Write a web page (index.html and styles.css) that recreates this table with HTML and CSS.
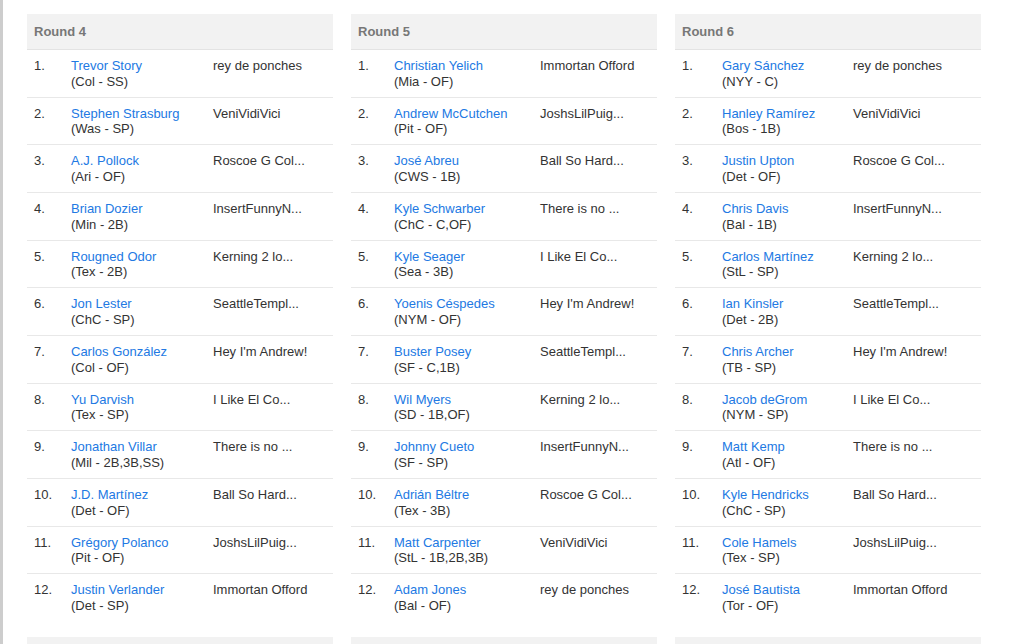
FILE: index.html
```html
<!DOCTYPE html>
<html>
<head>
<meta charset="utf-8">
<link rel="stylesheet" href="styles.css">
</head>
<body>
<div class="page">
  <div class="rounds">
    <section class="round r4">
      <div class="head">Round 4</div>
      <div class="row"><span class="num">1.</span><span class="player"><a>Trevor Story</a><br>(Col - SS)</span><span class="mgr">rey de ponches</span></div>
      <div class="row"><span class="num">2.</span><span class="player"><a>Stephen Strasburg</a><br>(Was - SP)</span><span class="mgr">VeniVidiVici</span></div>
      <div class="row"><span class="num">3.</span><span class="player"><a>A.J. Pollock</a><br>(Ari - OF)</span><span class="mgr">Roscoe G Col...</span></div>
      <div class="row"><span class="num">4.</span><span class="player"><a>Brian Dozier</a><br>(Min - 2B)</span><span class="mgr">InsertFunnyN...</span></div>
      <div class="row"><span class="num">5.</span><span class="player"><a>Rougned Odor</a><br>(Tex - 2B)</span><span class="mgr">Kerning 2 lo...</span></div>
      <div class="row"><span class="num">6.</span><span class="player"><a>Jon Lester</a><br>(ChC - SP)</span><span class="mgr">SeattleTempl...</span></div>
      <div class="row"><span class="num">7.</span><span class="player"><a>Carlos González</a><br>(Col - OF)</span><span class="mgr">Hey I'm Andrew!</span></div>
      <div class="row"><span class="num">8.</span><span class="player"><a>Yu Darvish</a><br>(Tex - SP)</span><span class="mgr">I Like El Co...</span></div>
      <div class="row"><span class="num">9.</span><span class="player"><a>Jonathan Villar</a><br>(Mil - 2B,3B,SS)</span><span class="mgr">There is no ...</span></div>
      <div class="row"><span class="num">10.</span><span class="player"><a>J.D. Martínez</a><br>(Det - OF)</span><span class="mgr">Ball So Hard...</span></div>
      <div class="row"><span class="num">11.</span><span class="player"><a>Grégory Polanco</a><br>(Pit - OF)</span><span class="mgr">JoshsLilPuig...</span></div>
      <div class="row"><span class="num">12.</span><span class="player"><a>Justin Verlander</a><br>(Det - SP)</span><span class="mgr">Immortan Offord</span></div>
    </section>
    <section class="round r5">
      <div class="head">Round 5</div>
      <div class="row"><span class="num">1.</span><span class="player"><a>Christian Yelich</a><br>(Mia - OF)</span><span class="mgr">Immortan Offord</span></div>
      <div class="row"><span class="num">2.</span><span class="player"><a>Andrew McCutchen</a><br>(Pit - OF)</span><span class="mgr">JoshsLilPuig...</span></div>
      <div class="row"><span class="num">3.</span><span class="player"><a>José Abreu</a><br>(CWS - 1B)</span><span class="mgr">Ball So Hard...</span></div>
      <div class="row"><span class="num">4.</span><span class="player"><a>Kyle Schwarber</a><br>(ChC - C,OF)</span><span class="mgr">There is no ...</span></div>
      <div class="row"><span class="num">5.</span><span class="player"><a>Kyle Seager</a><br>(Sea - 3B)</span><span class="mgr">I Like El Co...</span></div>
      <div class="row"><span class="num">6.</span><span class="player"><a>Yoenis Céspedes</a><br>(NYM - OF)</span><span class="mgr">Hey I'm Andrew!</span></div>
      <div class="row"><span class="num">7.</span><span class="player"><a>Buster Posey</a><br>(SF - C,1B)</span><span class="mgr">SeattleTempl...</span></div>
      <div class="row"><span class="num">8.</span><span class="player"><a>Wil Myers</a><br>(SD - 1B,OF)</span><span class="mgr">Kerning 2 lo...</span></div>
      <div class="row"><span class="num">9.</span><span class="player"><a>Johnny Cueto</a><br>(SF - SP)</span><span class="mgr">InsertFunnyN...</span></div>
      <div class="row"><span class="num">10.</span><span class="player"><a>Adrián Béltre</a><br>(Tex - 3B)</span><span class="mgr">Roscoe G Col...</span></div>
      <div class="row"><span class="num">11.</span><span class="player"><a>Matt Carpenter</a><br>(StL - 1B,2B,3B)</span><span class="mgr">VeniVidiVici</span></div>
      <div class="row"><span class="num">12.</span><span class="player"><a>Adam Jones</a><br>(Bal - OF)</span><span class="mgr">rey de ponches</span></div>
    </section>
    <section class="round r6">
      <div class="head">Round 6</div>
      <div class="row"><span class="num">1.</span><span class="player"><a>Gary Sánchez</a><br>(NYY - C)</span><span class="mgr">rey de ponches</span></div>
      <div class="row"><span class="num">2.</span><span class="player"><a>Hanley Ramírez</a><br>(Bos - 1B)</span><span class="mgr">VeniVidiVici</span></div>
      <div class="row"><span class="num">3.</span><span class="player"><a>Justin Upton</a><br>(Det - OF)</span><span class="mgr">Roscoe G Col...</span></div>
      <div class="row"><span class="num">4.</span><span class="player"><a>Chris Davis</a><br>(Bal - 1B)</span><span class="mgr">InsertFunnyN...</span></div>
      <div class="row"><span class="num">5.</span><span class="player"><a>Carlos Martínez</a><br>(StL - SP)</span><span class="mgr">Kerning 2 lo...</span></div>
      <div class="row"><span class="num">6.</span><span class="player"><a>Ian Kinsler</a><br>(Det - 2B)</span><span class="mgr">SeattleTempl...</span></div>
      <div class="row"><span class="num">7.</span><span class="player"><a>Chris Archer</a><br>(TB - SP)</span><span class="mgr">Hey I'm Andrew!</span></div>
      <div class="row"><span class="num">8.</span><span class="player"><a>Jacob deGrom</a><br>(NYM - SP)</span><span class="mgr">I Like El Co...</span></div>
      <div class="row"><span class="num">9.</span><span class="player"><a>Matt Kemp</a><br>(Atl - OF)</span><span class="mgr">There is no ...</span></div>
      <div class="row"><span class="num">10.</span><span class="player"><a>Kyle Hendricks</a><br>(ChC - SP)</span><span class="mgr">Ball So Hard...</span></div>
      <div class="row"><span class="num">11.</span><span class="player"><a>Cole Hamels</a><br>(Tex - SP)</span><span class="mgr">JoshsLilPuig...</span></div>
      <div class="row"><span class="num">12.</span><span class="player"><a>José Bautista</a><br>(Tor - OF)</span><span class="mgr">Immortan Offord</span></div>
    </section>
    <section class="round"><div class="head">Round 7</div></section>
    <section class="round"><div class="head">Round 8</div></section>
    <section class="round"><div class="head">Round 9</div></section>
  </div>
</div>
</body>
</html>
```

FILE: styles.css
```css
html, body {
  margin: 0;
  padding: 0;
  background: #fff;
  overflow: hidden;
}
body {
  font-family: "Liberation Sans", Arial, sans-serif;
  font-size: 13px;
  color: #333;
}
.page {
  border-left: 3px solid #cdcdcd;
  min-height: 100vh;
  padding: 14px 0 0 24px;
  box-sizing: border-box;
}
.rounds {
  display: grid;
  grid-template-columns: 306px 306px 306px;
  column-gap: 18px;
  row-gap: 16px;
  align-items: start;
}
.head {
  height: 36px;
  box-sizing: border-box;
  background: #f2f2f2;
  border-bottom: 1px solid #e3e3e3;
  padding: 0 7px;
  line-height: 35px;
  font-weight: bold;
  color: #777;
}
.row {
  display: grid;
  grid-template-columns: 37px 142px 1fr;
  padding: 8px 7px 7.33px;
  line-height: 15.67px;
  border-bottom: 1px solid #e8e8e8;
}
.row:last-child {
  border-bottom: none;
}
.r5 .row { grid-template-columns: 36px 146px 1fr; }
.r6 .row { grid-template-columns: 40px 131px 1fr; }
.num, .mgr { color: #333; }
.player a {
  color: #2279e3;
  text-decoration: none;
}
```
